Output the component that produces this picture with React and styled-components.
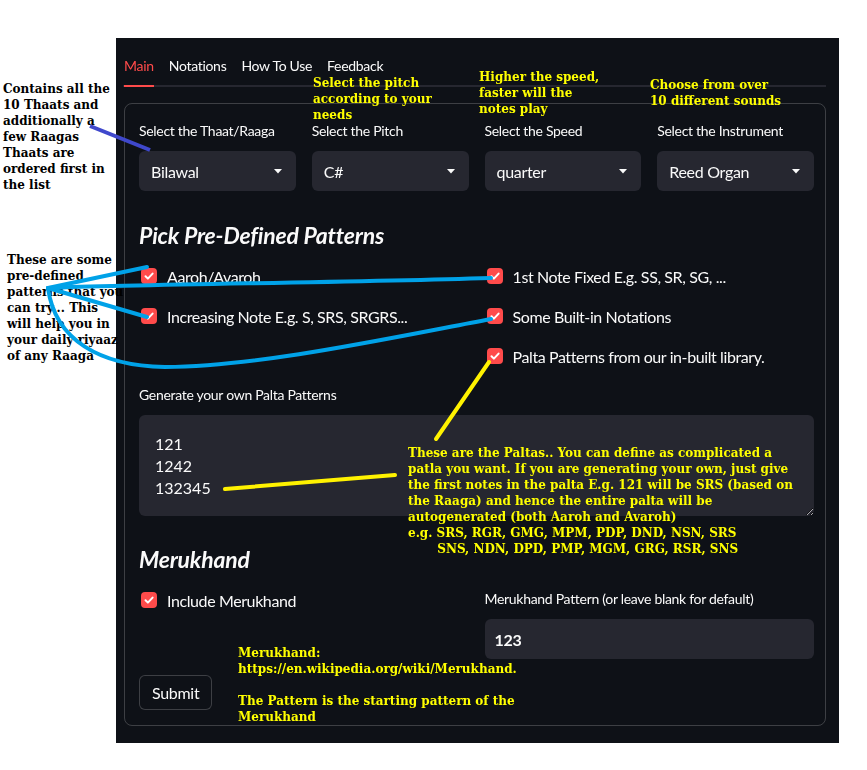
import styled, { createGlobalStyle } from "styled-components";

const GlobalStyle = createGlobalStyle`
    body {
        margin: 0;
        background: #ffffff;
        font-family: Lato, "Noto Sans", sans-serif;
    }
`;

const selects = [
    { label: "Select the Thaat/Raaga", value: "Bilawal" },
    { label: "Select the Pitch", value: "C#" },
    { label: "Select the Speed", value: "quarter" },
    { label: "Select the Instrument", value: "Reed Organ" },
];

const leftChecks = ["Aaroh/Avaroh", "Increasing Note E.g. S, SRS, SRGRS..."];
const rightChecks = [
    "1st Note Fixed E.g. SS, SR, SG, ...",
    "Some Built-in Notations",
    "Palta Patterns from our in-built library.",
];

const notes = [
    { x: 3, y: 81, dark: true, text: "Contains all the\n10 Thaats and\nadditionally a\nfew Raagas\nThaats are\nordered first in\nthe list" },
    { x: 7, y: 252, dark: true, text: "These are some\npre-defined\npatterns that you\ncan try... This\nwill help you in\nyour daily riyaaz\nof any Raaga" },
    { x: 313, y: 75, text: "Select the pitch\naccording to your\nneeds" },
    { x: 479, y: 69, text: "Higher the speed,\nfaster will the\nnotes play" },
    { x: 650, y: 77, text: "Choose from over\n10 different sounds" },
    {
        x: 408, y: 445,
        text: "These are the Paltas.. You can define as complicated a\npatla you want. If you are generating your own, just give\nthe first notes in the palta E.g. 121 will be SRS (based on\nthe Raaga) and hence the entire palta will be\nautogenerated (both Aaroh and Avaroh)\ne.g. SRS, RGR, GMG, MPM, PDP, DND, NSN, SRS\n       SNS, NDN, DPD, PMP, MGM, GRG, RSR, SNS",
    },
    { x: 238, y: 645, text: "Merukhand:\nhttps://en.wikipedia.org/wiki/Merukhand.\n\nThe Pattern is the starting pattern of the\nMerukhand" },
];

const Caret = () => (
    <svg width="8" height="5" viewBox="0 0 8 5">
        <path d="M0 0h8L4 4.5z" fill="#fafafa" />
    </svg>
);

const Check = ({ children }) => (
    <CheckItem>
        <Box>
            <svg width="12" height="12" viewBox="0 0 12 12">
                <path d="M2.5 6.2l2.4 2.4L9.6 3.6" fill="none" stroke="#fff" strokeWidth="2" strokeLinecap="round" strokeLinejoin="round" />
            </svg>
        </Box>
        {children}
    </CheckItem>
);

const App = () => {
    return (
        <Root>
            <GlobalStyle />
            <Panel>
                <TabList>
                    <Tab $active>Main</Tab>
                    <Tab>Notations</Tab>
                    <Tab>How To Use</Tab>
                    <Tab>Feedback</Tab>
                </TabList>

                <Form>
                    <SelectGrid>
                        {selects.map((s) => (
                            <div key={s.label}>
                                <Label>{s.label}</Label>
                                <Select>
                                    {s.value}
                                    <Caret />
                                </Select>
                            </div>
                        ))}
                    </SelectGrid>

                    <Heading>Pick Pre-Defined Patterns</Heading>
                    <TwoCol>
                        <CheckColumn>
                            {leftChecks.map((c) => <Check key={c}>{c}</Check>)}
                        </CheckColumn>
                        <CheckColumn>
                            {rightChecks.map((c) => <Check key={c}>{c}</Check>)}
                        </CheckColumn>
                    </TwoCol>

                    <Label $top={17}>Generate your own Palta Patterns</Label>
                    <TextArea readOnly defaultValue={"121\n1242\n132345"} />

                    <Heading $top={28}>Merukhand</Heading>
                    <TwoCol>
                        <Check>Include Merukhand</Check>
                        <div>
                            <Label $top={1}>Merukhand Pattern (or leave blank for default)</Label>
                            <Input>123</Input>
                        </div>
                    </TwoCol>

                    <Submit>Submit</Submit>
                </Form>
            </Panel>

            {notes.map((n) => (
                <Note key={n.x} $x={n.x} $y={n.y} $dark={n.dark}>{n.text}</Note>
            ))}

            <Overlay width="867" height="770" viewBox="0 0 867 770">
                <line x1="90" y1="126" x2="150" y2="150" stroke="#3f48cc" strokeWidth="4" />
                <g fill="none" stroke="#00a2e8" strokeWidth="4" strokeLinecap="round">
                    <path d="M48 288 L147 267" />
                    <path d="M48 288 L147 317" />
                    <path d="M48 288 C150 284, 330 283, 491 278" />
                    <path d="M48 288 C55 340, 100 366, 165 367 C260 366, 380 340, 491 319" />
                </g>
                <g fill="none" stroke="#fff200" strokeWidth="4" strokeLinecap="round">
                    <path d="M489 362 L436 439" />
                    <path d="M225 489 L395 475" />
                </g>
            </Overlay>
        </Root>
    );
};

export default App;

const Root = styled.div`
    position: relative;
    width: 867px;
    height: 770px;
    padding: 38px 0 0 116px;
    box-sizing: border-box;
    overflow: hidden;
`;

const Panel = styled.div`
    width: 723px;
    height: 705px;
    box-sizing: border-box;
    padding: 7px 13px 0 7px;
    background: #0e1117;
    color: #fafafa;
    letter-spacing: -0.3px;
`;

const TabList = styled.div`
    display: flex;
    gap: 15px;
    border-bottom: 2px solid #262730;
    padding-left: 1px;
`;

const Tab = styled.div`
    height: 40px;
    display: flex;
    align-items: center;
    font-size: 14px;
    color: ${(p) => (p.$active ? "#ff4b4b" : "#fafafa")};
    border-bottom: 2px solid ${(p) => (p.$active ? "#ff4b4b" : "transparent")};
    margin-bottom: -2px;
`;

const Form = styled.div`
    margin: 16px 0 0 1px;
    border: 1px solid rgba(250, 250, 250, 0.2);
    border-radius: 8px;
    padding: 17px 11px 15px 14px;
`;

const SelectGrid = styled.div`
    display: grid;
    grid-template-columns: repeat(4, 1fr);
    gap: 16px;
`;

const Label = styled.div`
    font-size: 14px;
    line-height: 20px;
    margin: ${(p) => p.$top || 0}px 0 10px;
`;

const Select = styled.div`
    height: 40px;
    display: flex;
    align-items: center;
    justify-content: space-between;
    padding: 0 14px 0 12px;
    background: #262730;
    border-radius: 6px;
    font-size: 16px;
`;

const Heading = styled.h2`
    margin: ${(p) => p.$top || 29}px 0 14px;
    font-size: 23px;
    line-height: 30px;
    font-style: italic;
    font-weight: 700;
    letter-spacing: -0.2px;
`;

const TwoCol = styled.div`
    display: grid;
    grid-template-columns: 1fr 1fr;
    gap: 16px;
    align-items: start;
`;

const CheckColumn = styled.div`
    display: flex;
    flex-direction: column;
    gap: 16px;
`;

const CheckItem = styled.div`
    display: flex;
    align-items: center;
    gap: 10px;
    height: 24px;
    padding-left: 2px;
    font-size: 16px;
    letter-spacing: -0.4px;
`;

const Box = styled.span`
    width: 16px;
    height: 16px;
    border-radius: 4px;
    background: #ff4b4b;
    display: flex;
    align-items: center;
    justify-content: center;
    flex-shrink: 0;
`;

const TextArea = styled.textarea`
    display: block;
    width: 100%;
    height: 101px;
    box-sizing: border-box;
    margin: 1px 0 0;
    padding: 18px 16px;
    border: none;
    border-radius: 6px;
    background: #262730;
    color: #fafafa;
    font-family: inherit;
    font-size: 16px;
    line-height: 22px;
    resize: vertical;
    outline: none;
`;

const Input = styled.div`
    height: 40px;
    display: flex;
    align-items: center;
    padding: 0 10px;
    background: #262730;
    border-radius: 6px;
    font-size: 16px;
    font-weight: 700;
`;

const Submit = styled.button`
    display: block;
    margin-top: 16px;
    height: 35px;
    padding: 0 12px;
    background: #0e1117;
    color: #fafafa;
    border: 1px solid rgba(250, 250, 250, 0.2);
    border-radius: 6px;
    font-family: inherit;
    font-size: 16px;
    letter-spacing: -0.3px;
`;

const Note = styled.div`
    position: absolute;
    left: ${(p) => p.$x}px;
    top: ${(p) => p.$y}px;
    white-space: pre;
    font-family: "DejaVu Serif", "Liberation Serif", serif;
    font-weight: 700;
    font-size: 12px;
    line-height: 16px;
    color: ${(p) => (p.$dark ? "#000000" : "#ffff00")};
`;

const Overlay = styled.svg`
    position: absolute;
    left: 0;
    top: 0;
    pointer-events: none;
`;
